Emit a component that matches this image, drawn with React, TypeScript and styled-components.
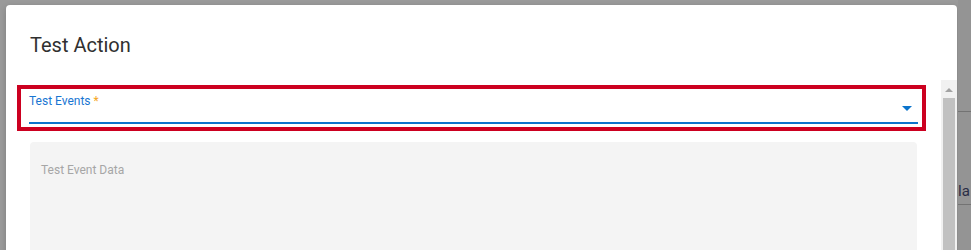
import React from "react";
import styled, { createGlobalStyle } from "styled-components";

const Global = createGlobalStyle`
  html, body { margin: 0; padding: 0; }
  *, *::before, *::after { box-sizing: border-box; }
  body {
    background: #9a9a9a;
    font-family: Roboto, "Liberation Sans", sans-serif;
    overflow: hidden;
  }
`;

const Page = styled.div`
  display: flex;
  align-items: flex-start;
  width: 971px;
  height: 250px;
  overflow: hidden;
`;

const Dialog = styled.div`
  margin: 5px 0 0 6px;
  width: 951px;
  height: 320px;
  flex: none;
  background: #ffffff;
  border-radius: 4px;
  box-shadow: 0 2px 6px rgba(0, 0, 0, 0.18);
  display: flex;
  flex-direction: column;
`;

const Title = styled.h2`
  margin: 0;
  padding: 24px 24px 19px 24px;
  font-size: 20px;
  line-height: 32px;
  font-weight: 400;
  color: #303030;
`;

const Body = styled.div`
  display: flex;
  flex: 1;
  min-height: 0;
`;

const Content = styled.div`
  flex: 1;
  display: flex;
  flex-direction: column;
  padding-top: 5px;
`;

const Highlight = styled.div`
  margin: 0 15px 0 11px;
  border: 4px solid #cc0020;
  padding: 4px 4px 3px 8px;
`;

const Field = styled.div`
  display: flex;
  flex-direction: column;
  height: 31px;
  padding-top: 1px;
  border-bottom: 2px solid #0b74cc;
`;

const Label = styled.label<{ $muted?: boolean }>`
  font-size: 12px;
  line-height: 14px;
  color: ${(p) => (p.$muted ? "#a6a6a6" : "#1976d2")};
`;

const Required = styled.span`
  color: #f5a623;
`;

const SelectRow = styled.div`
  flex: 1;
  display: flex;
  justify-content: flex-end;
  align-items: flex-start;
  padding-right: 6px;
`;

const Caret = styled.span`
  margin-top: -2px;
  width: 0;
  height: 0;
  border-left: 5px solid transparent;
  border-right: 5px solid transparent;
  border-top: 5px solid #0b74cc;
`;

const DataBox = styled.div`
  margin: 11px 24px 0 24px;
  flex: 1;
  background: #f4f4f4;
  border-radius: 4px 4px 0 0;
  padding: 17px 11px 0 11px;
`;

const Scrollbar = styled.div`
  width: 16px;
  flex: none;
  background: #f1f1f1;
  display: flex;
  flex-direction: column;
  align-items: center;
`;

const ScrollArrow = styled.span`
  margin-top: 8px;
  width: 0;
  height: 0;
  border-left: 4px solid transparent;
  border-right: 4px solid transparent;
  border-bottom: 4px solid #a3a3a3;
`;

const Thumb = styled.div`
  margin-top: 6px;
  width: 12px;
  flex: 1;
  background: #c1c1c1;
`;

const BehindStrip = styled.div`
  flex: 1;
  align-self: stretch;
  margin-left: 1px;
  background: #949494;
  padding-top: 111px;
  overflow: hidden;
`;

const BehindRow = styled.div`
  border-top: 1px solid #737373;
  border-bottom: 1px solid #737373;
  height: 94px;
  padding-top: 71px;
  font-size: 15px;
  line-height: 16px;
  color: #2a2d45;
  white-space: nowrap;
`;

export default function App() {
  return (
    <>
      <Global />
      <Page>
        <Dialog>
          <Title>Test Action</Title>
          <Body>
            <Content>
              <Highlight>
                <Field>
                  <Label>
                    Test Events <Required>*</Required>
                  </Label>
                  <SelectRow>
                    <Caret />
                  </SelectRow>
                </Field>
              </Highlight>
              <DataBox>
                <Label $muted>Test Event Data</Label>
              </DataBox>
            </Content>
            <Scrollbar>
              <ScrollArrow />
              <Thumb />
            </Scrollbar>
          </Body>
        </Dialog>
        <BehindStrip>
          <BehindRow>la</BehindRow>
        </BehindStrip>
      </Page>
    </>
  );
}
